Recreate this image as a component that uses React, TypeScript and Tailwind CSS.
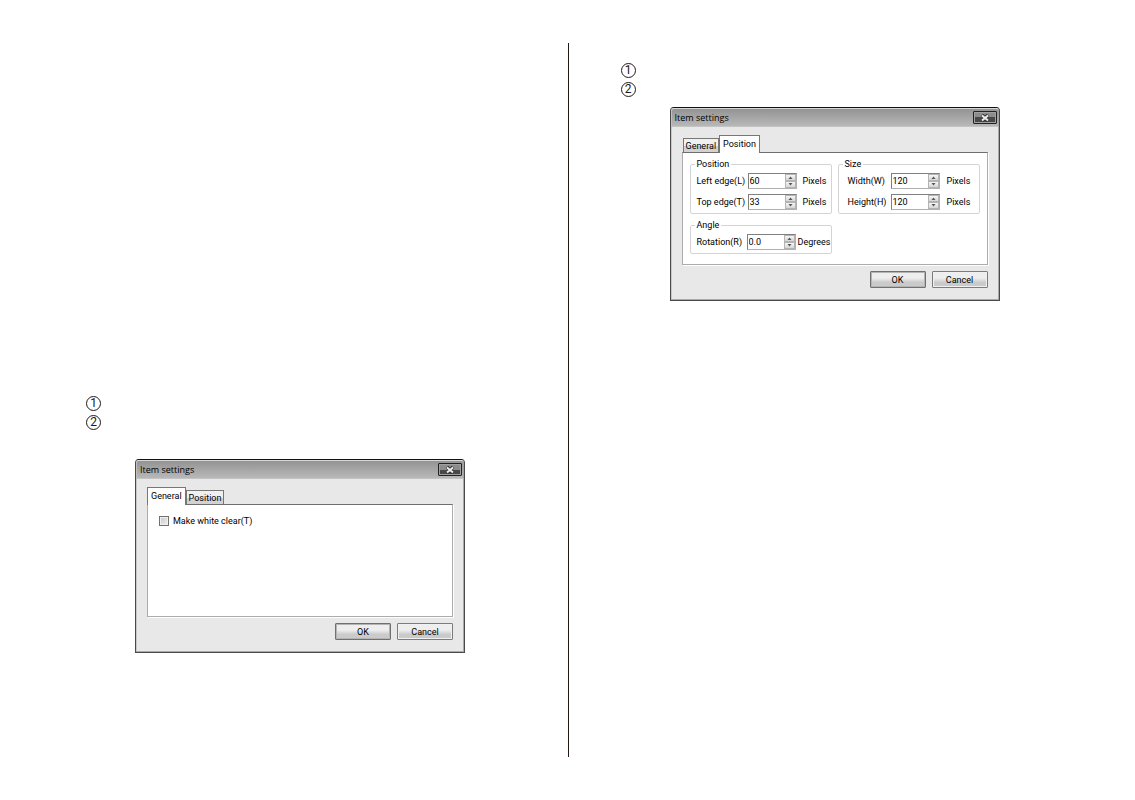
import React, { useId, useState } from 'react';
import clsx from 'clsx';

type Tab = 'General' | 'Position';

const tabs: Tab[] = ['General', 'Position'];

function Steps() {
  return (
    <ol className="flex flex-col gap-1 font-['Roboto',sans-serif] text-[12px] leading-[13px] text-[#231815]">
      {[1, 2].map((n) => (
        <li
          key={n}
          className="flex h-[15px] w-[15px] items-center justify-center rounded-full border border-[#231815]"
        >
          {n}
        </li>
      ))}
    </ol>
  );
}

function SpinButton({ label, up, onClick }: { label: string; up?: boolean; onClick: () => void }) {
  return (
    <button
      type="button"
      aria-label={label}
      onClick={onClick}
      className="flex flex-1 items-center justify-center border border-[#b4b4b4] bg-gradient-to-b from-[#f6f6f6] to-[#d6d6d6]"
    >
      <svg width="5" height="3" viewBox="0 0 5 3" fill="#555">
        <path d={up ? 'M0.5 3L2.5 0.5L4.5 3Z' : 'M0.5 0L2.5 2.5L4.5 0Z'} />
      </svg>
    </button>
  );
}

type FieldProps = { label: string; unit: string; initial: string; digits?: number };

function NumberField({ label, unit, initial, digits = 0 }: FieldProps) {
  const id = useId();
  const [value, setValue] = useState(initial);
  const step = (by: number) => setValue((Number(value) + by).toFixed(digits));

  return (
    <>
      <label htmlFor={id}>{label}</label>
      <div className="flex h-4 border border-[#b0b0b0] border-t-[#808080] border-l-[#808080] bg-white">
        <input
          id={id}
          value={value}
          onChange={(e) => setValue(e.target.value)}
          className="w-0 min-w-0 flex-1 pl-px outline-none"
        />
        <div className="flex w-[11px] flex-col">
          <SpinButton up label={`Increase ${label}`} onClick={() => step(1)} />
          <SpinButton label={`Decrease ${label}`} onClick={() => step(-1)} />
        </div>
      </div>
      <span>{unit}</span>
    </>
  );
}

function Group({ title, className, children }: { title: string; className: string; children: React.ReactNode }) {
  return (
    <fieldset className="min-w-0 rounded-[2px] border border-[#d4d4d4] pb-[3px]">
      <legend className="ml-1 h-[10px] px-[2px] leading-[10px]">{title}</legend>
      <div className={clsx('grid items-center gap-y-[5px] pt-1 whitespace-nowrap', className)}>{children}</div>
    </fieldset>
  );
}

function PositionPanel() {
  return (
    <div className="grid grid-cols-2 gap-x-[6px] gap-y-[6px] px-[7px] pt-[6px]">
      <Group title="Position" className="grid-cols-[45px_49px_1fr] gap-x-[6px] pl-[6px]">
        <NumberField label="Left edge(L)" unit="Pixels" initial="60" />
        <NumberField label="Top edge(T)" unit="Pixels" initial="33" />
      </Group>
      <Group title="Size" className="grid-cols-[36px_49px_1fr] gap-x-[7px] pl-[9px]">
        <NumberField label="Width(W)" unit="Pixels" initial="120" />
        <NumberField label="Height(H)" unit="Pixels" initial="120" />
      </Group>
      <Group title="Angle" className="grid-cols-[48px_49px_1fr] gap-x-[2px] pl-[6px]">
        <NumberField label="Rotation(R)" unit="Degrees" initial="0.0" digits={1} />
      </Group>
    </div>
  );
}

function GeneralPanel() {
  return (
    <label className="flex w-fit items-center gap-1 pt-[11px] pl-[11px]">
      <input
        type="checkbox"
        className="h-[10px] w-[10px] appearance-none border border-[#707070] bg-gradient-to-br from-[#c4c4c4] to-[#f4f4f4] shadow-[inset_0_0_0_1px_#f0f0f0] checked:bg-[#555]"
      />
      Make white clear(T)
    </label>
  );
}

function DialogButton({ children, primary }: { children: string; primary?: boolean }) {
  return (
    <button
      type="button"
      className={clsx(
        'h-[17px] w-14 rounded-[1px] border bg-gradient-to-b from-[#eeeeee] from-40% to-[#cacaca] to-70%',
        primary ? 'border-[#707070] shadow-[inset_0_0_0_1px_#b4b4b4]' : 'border-[#7c7c7c] shadow-[inset_0_0_0_1px_#f0f0f0]'
      )}
    >
      {children}
    </button>
  );
}

function ItemSettings({ initialTab }: { initialTab: Tab }) {
  const [active, setActive] = useState<Tab>(initialTab);

  return (
    <section
      aria-label="Item settings"
      className="w-full max-w-[330px] rounded-t-[4px] border border-[#4a4a4a] border-t-[#111] bg-[#e8e8e8] font-['Roboto',Arial,sans-serif] text-[9px] leading-[10px] text-black shadow-[inset_-1px_-1px_0_#aaa,inset_1px_0_0_#c8c8c8]"
    >
      <header className="flex h-[19px] items-center justify-between rounded-t-[3px] border border-t-[#d8d8d8] border-r-[#a0a0a0] border-b-[#c4c4c4] border-l-[#c0c0c0] bg-gradient-to-b from-[#949494] to-[#b8b8b8] pr-px pl-[3px]">
        <h2 className="font-['Open_Sans',sans-serif] text-[9px]">Item settings</h2>
        <button
          type="button"
          aria-label="Close"
          className="flex h-[13px] w-6 items-center justify-center rounded-[1px] border border-[#222] bg-gradient-to-b from-[#8c8c8c] from-50% to-[#484848] to-50% shadow-[inset_0_0_0_1px_#a0a0a0]"
        >
          <svg width="10" height="8" viewBox="0 0 10 8" fill="none">
            <path d="M2 1L8 7M8 1L2 7" stroke="#333" strokeWidth="3.6" />
            <path d="M2 1.5L8 6.5M8 1.5L2 6.5" stroke="#eee" strokeWidth="2" />
          </svg>
        </button>
      </header>

      <div className="px-[11px] pt-2 pb-3">
        <div role="tablist" className="flex h-[17px] items-end">
          {tabs.map((tab) => (
            <button
              key={tab}
              type="button"
              role="tab"
              aria-selected={tab === active}
              onClick={() => setActive(tab)}
              className={clsx(
                'border border-b-0 border-[#777] whitespace-nowrap',
                tab === active
                  ? 'z-10 -mb-px h-[18px] bg-white px-[3px] pb-[2px]'
                  : 'h-[14px] bg-gradient-to-b from-[#f0f0f0] from-50% to-[#d2d2d2] to-50% px-[2px] first:ml-px'
              )}
            >
              {tab}
            </button>
          ))}
        </div>
        <div
          role="tabpanel"
          className="min-h-[113px] border border-[#acacac] border-t-[#6e6e6e] bg-white shadow-[1px_1px_0_#fff]"
        >
          {active === 'General' ? <GeneralPanel /> : <PositionPanel />}
        </div>
        <div className="flex justify-end gap-[6px] pt-[6px]">
          <DialogButton primary>OK</DialogButton>
          <DialogButton>Cancel</DialogButton>
        </div>
      </div>
    </section>
  );
}

export default function App() {
  return (
    <main className="grid min-h-screen grid-cols-2 bg-white py-[43px]">
      <div className="flex flex-col gap-[29px] pt-[353px] pl-[86px]">
        <Steps />
        <div className="pl-[49px]">
          <ItemSettings initialTab="General" />
        </div>
      </div>
      <div className="flex flex-col gap-[10px] border-l border-[#231815] pt-5 pl-[52px]">
        <Steps />
        <div className="pl-[49px]">
          <ItemSettings initialTab="Position" />
        </div>
      </div>
    </main>
  );
}
